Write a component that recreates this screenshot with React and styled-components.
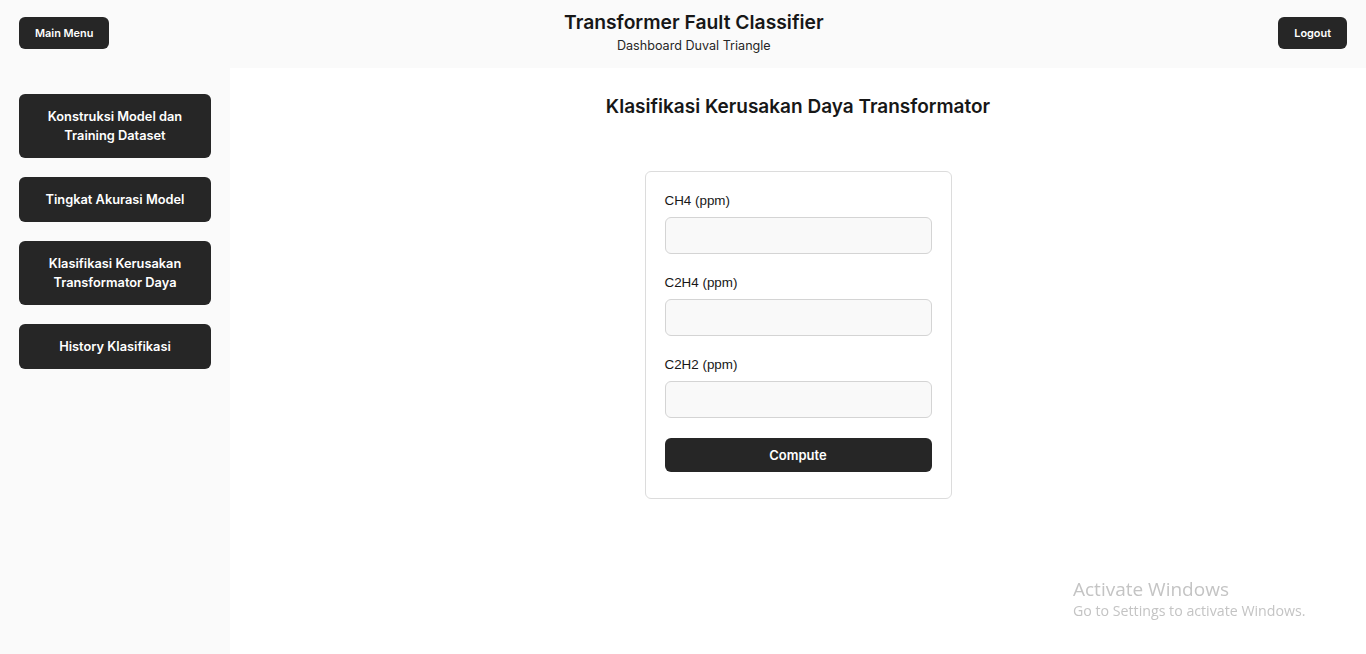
import styled, { createGlobalStyle } from "styled-components";

const GlobalStyle = createGlobalStyle`
  * { box-sizing: border-box; }
  html, body { margin: 0; padding: 0; }
  body {
    font-family: Inter, "Noto Sans", sans-serif;
    background: #fafafa;
    color: #171717;
  }
`;

const Page = styled.div`
  display: flex;
  flex-direction: column;
  height: 654px;
  overflow: hidden;
`;

const Header = styled.header`
  display: flex;
  align-items: flex-start;
  justify-content: space-between;
  height: 68px;
  padding: 17px 19px 0;
  background: #fafafa;
`;

const TopButton = styled.button`
  height: 32px;
  padding: 0 16px;
  border: none;
  border-radius: 6px;
  background: #262626;
  color: #fff;
  font-family: Inter, sans-serif;
  font-size: 10.9px;
  font-weight: 600;
  cursor: pointer;
`;

const Brand = styled.div`
  display: flex;
  flex-direction: column;
  align-items: center;
  margin-top: -7px;
`;

const BrandTitle = styled.h1`
  margin: 0;
  font-size: 19.3px;
  line-height: 24px;
  font-weight: 600;
  color: #171717;
`;

const BrandSub = styled.span`
  font-size: 12.6px;
  line-height: 16px;
  margin-top: 4px;
  color: #262626;
`;

const Body = styled.div`
  flex: 1;
  display: flex;
`;

const Sidebar = styled.nav`
  width: 230px;
  flex-shrink: 0;
  display: flex;
  flex-direction: column;
  gap: 19px;
  padding: 26px 19px;
  background: #fafafa;
`;

const NavButton = styled.button`
  width: 192px;
  min-height: ${(p) => (p.$tall ? "64px" : "45px")};
  padding: 0 20px;
  border: none;
  border-radius: 6px;
  background: #262626;
  color: #fff;
  font-family: Inter, sans-serif;
  font-size: 12.8px;
  line-height: 19px;
  font-weight: 600;
  text-align: center;
  cursor: pointer;
`;

const Main = styled.main`
  flex: 1;
  display: flex;
  flex-direction: column;
  align-items: center;
  padding-top: 27px;
  background: #fff;
`;

const PageTitle = styled.h2`
  margin: 0 0 52px;
  font-size: 19px;
  line-height: 24px;
  font-weight: 600;
  color: #171717;
`;

const Card = styled.form`
  width: 307px;
  display: flex;
  flex-direction: column;
  gap: 20px;
  padding: 20px 19px 26px;
  border: 1px solid #dcdcdc;
  border-radius: 6px;
  background: #fff;
`;

const Field = styled.div`
  display: flex;
  flex-direction: column;
  gap: 8px;
`;

const Label = styled.label`
  font-family: "Liberation Sans", Arial, sans-serif;
  font-size: 13.4px;
  line-height: 17px;
  color: #171717;
`;

const Input = styled.input`
  height: 37px;
  width: 100%;
  border: 1px solid #d4d4d4;
  border-radius: 6px;
  background: #f9f9f9;
  padding: 0 10px;
  font-size: 13px;
  outline: none;
`;

const Submit = styled.button`
  height: 34px;
  border: none;
  border-radius: 6px;
  background: #262626;
  color: #fff;
  font-family: Inter, sans-serif;
  font-size: 13px;
  font-weight: 600;
  cursor: pointer;
`;

const Watermark = styled.div`
  position: fixed;
  left: 1073px;
  top: 577px;
  font-family: "Open Sans", "Noto Sans", sans-serif;
  color: #c4c4c4;
  pointer-events: none;
`;

const WatermarkTitle = styled.div`
  font-size: 19px;
  line-height: 24px;
`;

const WatermarkSub = styled.div`
  font-size: 14.2px;
  line-height: 18px;
  margin-top: 1px;
`;

const navItems = [
  { label: "Konstruksi Model dan Training Dataset", tall: true },
  { label: "Tingkat Akurasi Model" },
  { label: "Klasifikasi Kerusakan Transformator Daya", tall: true },
  { label: "History Klasifikasi" },
];

const fields = ["CH4 (ppm)", "C2H4 (ppm)", "C2H2 (ppm)"];

const App = () => {
  return (
    <>
      <GlobalStyle />
      <Page>
        <Header>
          <TopButton>Main Menu</TopButton>
          <Brand>
            <BrandTitle>Transformer Fault Classifier</BrandTitle>
            <BrandSub>Dashboard Duval Triangle</BrandSub>
          </Brand>
          <TopButton>Logout</TopButton>
        </Header>
        <Body>
          <Sidebar>
            {navItems.map((item) => (
              <NavButton key={item.label} $tall={item.tall}>
                {item.label}
              </NavButton>
            ))}
          </Sidebar>
          <Main>
            <PageTitle>Klasifikasi Kerusakan Daya Transformator</PageTitle>
            <Card onSubmit={(e) => e.preventDefault()}>
              {fields.map((f) => (
                <Field key={f}>
                  <Label>{f}</Label>
                  <Input type="number" />
                </Field>
              ))}
              <Submit type="submit">Compute</Submit>
            </Card>
          </Main>
        </Body>
      </Page>
      <Watermark>
        <WatermarkTitle>Activate Windows</WatermarkTitle>
        <WatermarkSub>Go to Settings to activate Windows.</WatermarkSub>
      </Watermark>
    </>
  );
};

export default App;
